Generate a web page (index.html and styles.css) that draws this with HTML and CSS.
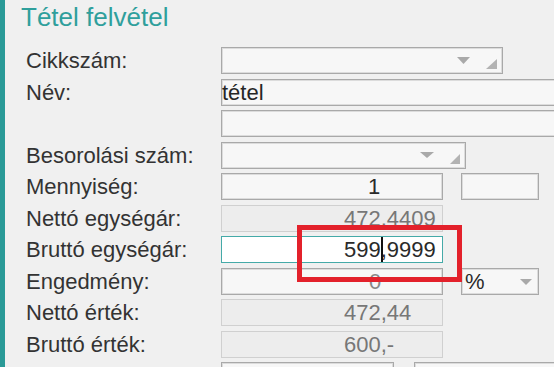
FILE: index.html
```html
<!DOCTYPE html>
<html lang="hu">
<head>
<meta charset="utf-8">
<title>Tétel felvétel</title>
<link rel="stylesheet" href="styles.css">
</head>
<body>
<div class="page">
  <div class="bar"></div>
  <div class="content">
    <h1 class="title">Tétel felvétel</h1>
    <div class="form">
      <div class="label">Cikkszám:</div>
      <div class="cell">
        <div class="field combo w-cikk">
          <span class="val"></span>
          <svg class="arrow" width="13" height="7" viewBox="0 0 13 7"><path d="M0 0H13L6.5 7Z" fill="#a9a9a9"/></svg>
          <svg class="grip" width="11" height="10" viewBox="0 0 11 10"><path d="M11 0V10H0Z" fill="#b3b3b3"/></svg>
        </div>
      </div>

      <div class="label">Név:</div>
      <div class="cell"><div class="field w-wide"><span class="val">tétel</span></div></div>

      <div class="label"></div>
      <div class="cell"><div class="field w-wide"></div></div>

      <div class="label">Besorolási szám:</div>
      <div class="cell">
        <div class="field combo w-besor">
          <span class="val"></span>
          <svg class="arrow" width="14" height="6" viewBox="0 0 14 6"><path d="M0 0H14L7 6Z" fill="#a9a9a9"/></svg>
          <svg class="grip" width="10" height="10" viewBox="0 0 10 10"><path d="M10 0V10H0Z" fill="#b3b3b3"/></svg>
        </div>
      </div>

      <div class="label">Mennyiség:</div>
      <div class="cell">
        <div class="field w-num"><span class="val num-c">1</span></div>
        <div class="field w-small"></div>
      </div>

      <div class="label">Nettó egységár:</div>
      <div class="cell"><div class="field disabled w-num"><span class="val num">472,4409</span></div></div>

      <div class="label">Bruttó egységár:</div>
      <div class="cell"><div class="field active w-num"><span class="val num dark">599<span class="caret"></span>,9999</span></div></div>

      <div class="label">Engedmény:</div>
      <div class="cell">
        <div class="field w-num"><span class="val num-c zero">0</span></div>
        <div class="field combo w-small">
          <span class="val pct">%</span>
          <svg class="arrow arrow-pct" width="12" height="6" viewBox="0 0 12 6"><path d="M0 0H12L6 6Z" fill="#a9a9a9"/></svg>
        </div>
      </div>

      <div class="label">Nettó érték:</div>
      <div class="cell"><div class="field disabled w-num"><span class="val num">472,44</span></div></div>

      <div class="label">Bruttó érték:</div>
      <div class="cell"><div class="field disabled w-num"><span class="val num">600,-</span></div></div>

      <div class="label"></div>
      <div class="cell">
        <div class="field w-half"></div>
        <div class="field w-rest"></div>
      </div>
    </div>
  </div>
  <div class="highlight"></div>
</div>
</body>
</html>
```

FILE: styles.css
```css
html, body {
  margin: 0;
  padding: 0;
  overflow: hidden;
  background: #f0f0f0;
}

.page {
  position: relative;
  display: flex;
  width: 554px;
  height: 367px;
  overflow: hidden;
  font-family: "Liberation Sans", Arial, sans-serif;
  color: #333333;
}

.bar {
  flex: 0 0 5px;
  background: #2a9a97;
}

.content {
  flex: 1;
  padding-left: 21px;
  min-width: 0;
}

.title {
  margin: 2px 0 0 -5px;
  font-size: 26px;
  line-height: 30px;
  font-weight: normal;
  color: #2f9f9c;
  white-space: nowrap;
}

.form {
  margin-top: 15px;
  display: grid;
  grid-template-columns: 195px 1fr;
  grid-auto-rows: 27px;
  row-gap: 4.5px;
}

.label {
  font-size: 22px;
  line-height: 28px;
  white-space: nowrap;
  color: #333333;
}

.cell {
  display: flex;
  gap: 18px;
  min-width: 0;
}

.field {
  box-sizing: border-box;
  height: 27px;
  flex: 0 0 auto;
  display: flex;
  align-items: center;
  border: 1px solid #a9a9a9;
  box-shadow: inset 0 0 0 1px #dcdcdc;
  background: #f7f7f7;
  font-size: 22px;
  line-height: 25px;
  white-space: nowrap;
}

.field.disabled {
  border-color: #d0d0d0;
  box-shadow: none;
  background: #ededed;
  color: #7a7a7a;
}

.field.active {
  border-color: #45aaa8;
  box-shadow: none;
  background: #ffffff;
}

.val {
  flex: 1;
  display: block;
  color: #262626;
}

.disabled .val {
  color: #777777;
}

.num {
  padding-left: 122px;
}

.num.dark {
  color: #2a2a2a;
}

.num-c {
  padding-left: 146px;
  color: #2a2a2a;
}

.num-c.zero {
  padding-left: 147px;
  color: #888;
}

.pct {
  padding-left: 3px;
  color: #2a2a2a;
}

.caret {
  display: inline-block;
  width: 2px;
  height: 25px;
  margin-right: -2px;
  vertical-align: -5px;
  background: #111;
}

.w-cikk { width: 282px; }
.w-wide { width: 360px; }
.w-besor { width: 245px; }
.w-num { width: 222px; }
.w-small { width: 78px; }
.w-half { width: 173px; }
.w-rest { width: 200px; }
.cell .w-rest { margin-left: 2px; }

.combo .arrow {
  flex: 0 0 auto;
  align-self: flex-start;
  margin-top: 9px;
}

.combo .grip {
  flex: 0 0 auto;
  align-self: flex-end;
  margin-bottom: 4px;
}

.w-cikk .arrow { margin-right: 16px; }
.w-cikk .grip { margin-right: 5px; }

.w-besor .arrow { margin-right: 16px; margin-top: 9px; }
.w-besor .grip { margin-right: 5px; }

.arrow-pct {
  margin-right: 6px;
  margin-top: 10px !important;
}

.highlight {
  position: absolute;
  left: 297px;
  top: 225px;
  width: 165px;
  height: 57px;
  box-sizing: border-box;
  border: 5px solid #e3212b;
}
```
